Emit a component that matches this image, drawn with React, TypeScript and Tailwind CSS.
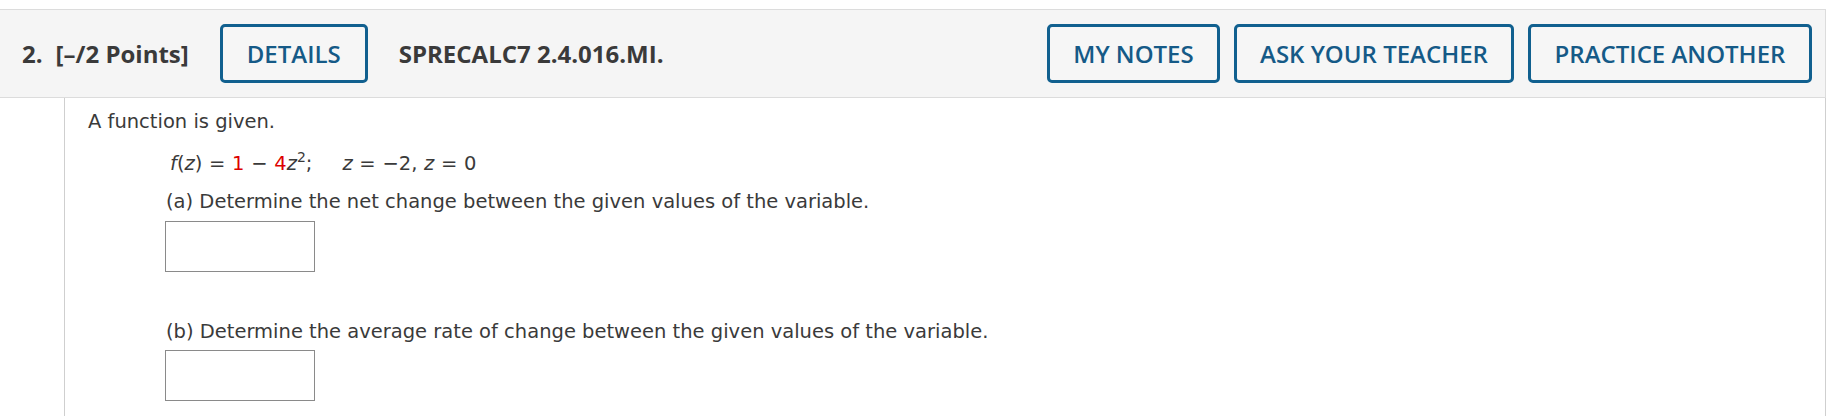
import React from 'react';

const headerFont = { fontFamily: '"Open Sans", "Liberation Sans", sans-serif' };

const ActionButton: React.FC<{ label: string; width: string }> = ({ label, width }) => (
  <button
    className={`h-[59px] ${width} shrink-0 rounded-[5px] border-[3px] border-[#11608f] bg-[#f6f6f6] text-[24px] font-semibold leading-none text-[#155a87]`}
  >
    {label}
  </button>
);

const AnswerBox: React.FC = () => (
  <div className="h-[51px] w-[150px] border border-[#8a8a8a] bg-white" />
);

export default function App() {
  return (
    <div className="h-[416px] w-full overflow-hidden bg-white pt-[9px]">
      {/* 题目头部 */}
      <div
        className="flex h-[89px] w-[1826px] items-center border-y border-r border-[#dcdcdc] bg-[#f5f5f5] pl-[22px] pr-[13px] text-[#3a3a3a]"
        style={headerFont}
      >
        <span className="text-[24px] font-bold">2.</span>
        <span className="ml-[13px] text-[24px] font-bold">[–/2 Points]</span>
        <div className="ml-[31px]">
          <ActionButton label="DETAILS" width="w-[148px]" />
        </div>
        <span className="ml-[31px] text-[24px] font-bold">SPRECALC7 2.4.016.MI.</span>
        <div className="ml-auto flex gap-[14px]">
          <ActionButton label="MY NOTES" width="w-[173px]" />
          <ActionButton label="ASK YOUR TEACHER" width="w-[280px]" />
          <ActionButton label="PRACTICE ANOTHER" width="w-[284px]" />
        </div>
      </div>

      {/* 题目内容 */}
      <div
        className="ml-[64px] h-[330px] w-[1762px] border-x border-[#cfcfcf] pl-[23px] pt-[10px] text-[19.5px] leading-[28px] text-[#3a3a3a]"
        style={{ fontFamily: '"DejaVu Sans", Verdana, sans-serif' }}
      >
        <div>A function is given.</div>
        <div className="ml-[82px] mt-[14px] whitespace-pre [word-spacing:0.5px]">
          <i>f</i>(<i>z</i>) = <span className="text-[#dd0000]">1</span> − <span className="text-[#dd0000]">4</span>
          <i>z</i>
          <sup className="top-[-0.6em] text-[14px]">2</sup>;<span className="inline-block w-[30px]" />
          <i>z</i> = −2, <i>z</i> = 0
        </div>
        <div className="ml-[78px] mt-[10px]">(a) Determine the net change between the given values of the variable.</div>
        <div className="ml-[77px] mt-[5px]">
          <AnswerBox />
        </div>
        <div className="ml-[78px] mt-[46px]">
          (b) Determine the average rate of change between the given values of the variable.
        </div>
        <div className="ml-[77px] mt-[4px]">
          <AnswerBox />
        </div>
      </div>
    </div>
  );
}
